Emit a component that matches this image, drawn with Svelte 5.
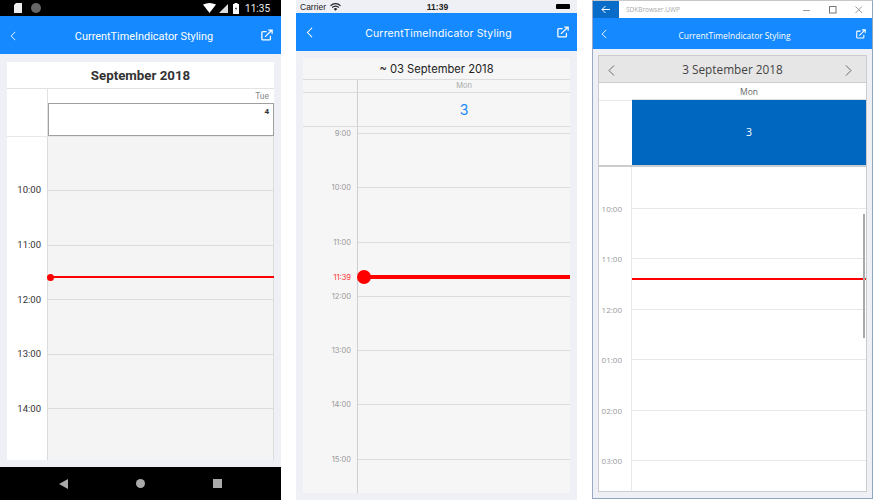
<script>
  const hoursA = ['10:00','11:00','12:00','13:00','14:00'];
  const hoursB = ['9:00','10:00','11:00','12:00','13:00','14:00','15:00'];
  const hoursC = ['10:00','11:00','12:00','01:00','02:00','03:00'];
</script>

{#snippet ext()}
  <svg class="ext" viewBox="0 0 14 14" fill="none" stroke="#fff" stroke-width="1.5">
    <path d="M11 8v3.600a1 1 0 0 1-1 1H2a1 1 0 0 1-1-1V4a1 1 0 0 1 1-1h4.500"/>
    <path d="M4.600 9.200 12 2M8.400 1.200h4.600v4.400" />
  </svg>
{/snippet}
{#snippet back()}
  <svg class="back" viewBox="0 0 8 13" fill="none" stroke="#fff" stroke-width="1.200"><path d="M7 1 1.500 6.500 7 12"/></svg>
{/snippet}

<div class="stage">
  <section class="phone a">
    <div class="status">
      <div class="s-left">
        <svg width="8" height="10" viewBox="0 0 8 10"><path d="M2 0h6v10H0V2z" fill="#eee"/></svg>
        <span class="rec"></span>
      </div>
      <div class="s-right">
        <svg width="13" height="10" viewBox="0 0 13 10"><path d="M0 1.500Q6.500-1.500 13 1.500L6.500 10z" fill="#fff"/></svg>
        <svg width="9" height="9" viewBox="0 0 9 9"><path d="M9 0v9H0z" fill="#ddd"/></svg>
        <svg class="batt" width="6" height="11" viewBox="0 0 6 11"><path d="M1.500 0h3v1H6v10H0V1h1.500z" fill="#fff"/><path d="M3.500 3 2 6h1.200L2.500 8.500 4 5.200H2.800z" fill="#000"/></svg>
        <span>11:35</span>
      </div>
    </div>
    <header class="bar">
      {@render back()}
      <h1>CurrentTimeIndicator Styling</h1>
      {@render ext()}
    </header>
    <div class="body">
      <div class="card">
        <div class="title">September 2018</div>
        <div class="head">
          <div class="gut"></div>
          <div class="col">
            <div class="dow">Tue</div>
            <div class="cell"><b>4</b></div>
          </div>
        </div>
        <div class="grid">
          <div class="labels">{#each hoursA as h}<span>{h}</span>{/each}</div>
          <div class="lines">{#each hoursA as h}<i></i>{/each}</div>
          <div class="now"><em></em></div>
        </div>
      </div>
    </div>
    <nav class="softkeys">
      <svg width="9" height="10" viewBox="0 0 9 10"><path d="M9 0v10L0 5z" fill="#aaa"/></svg>
      <span class="dot"></span>
      <span class="sq"></span>
    </nav>
  </section>

  <section class="phone b">
    <div class="status">
      <div class="s-left">
        <span>Carrier</span>
        <svg width="11" height="8" viewBox="0 0 11 8" fill="none" stroke="#222" stroke-width="1.200"><path d="M.5 2.800a7 7 0 0 1 10 0M2.200 4.500a4.600 4.600 0 0 1 6.600 0"/><path d="M3.800 6a2.200 2.200 0 0 1 3.400 0L5.500 7.800z" fill="#222" stroke="none"/></svg>
      </div>
      <strong>11:39</strong>
      <div class="ios-batt"><span></span></div>
    </div>
    <header class="bar">
      {@render back()}
      <h1>CurrentTimeIndicator Styling</h1>
      {@render ext()}
    </header>
    <div class="body">
      <div class="card">
        <div class="title">~ 03 September 2018</div>
        <div class="dow-row"><div class="gut"></div><div class="dow">Mon</div></div>
        <div class="num-row"><div class="gut"></div><div class="num">3</div></div>
        <div class="grid">
          <div class="labels">{#each hoursB as h}<span>{h}</span>{/each}</div>
          <div class="lines">{#each hoursB as h}<i></i>{/each}</div>
          <span class="now-label">11:39</span>
          <div class="now"><em></em></div>
        </div>
      </div>
    </div>
  </section>

  <section class="phone c">
    <div class="titlebar">
      <div class="tb-back">
        <svg width="10" height="9" viewBox="0 0 10 9" fill="none" stroke="#fff" stroke-width="1"><path d="M9 4.500H1M4.500 1 1 4.500 4.500 8"/></svg>
      </div>
      <span class="app">SDKBrowser.UWP</span>
      <div class="controls">
        <svg width="8" height="8" viewBox="0 0 8 8" stroke="#999" fill="none"><path d="M0 4.500h7"/></svg>
        <svg width="8" height="8" viewBox="0 0 8 8" stroke="#777" fill="none"><rect x=".5" y=".5" width="6.500" height="6.500"/></svg>
        <svg width="8" height="8" viewBox="0 0 8 8" stroke="#999" fill="none"><path d="m.5.500 6.500 6.500M7 .5.500 7"/></svg>
      </div>
    </div>
    <header class="bar">
      {@render back()}
      <h1>CurrentTimeIndicator Styling</h1>
      {@render ext()}
    </header>
    <div class="body">
      <div class="card">
        <div class="title">
          <svg width="7" height="11" viewBox="0 0 7 11" fill="none" stroke="#666"><path d="M6 .5 1 5.500l5 5"/></svg>
          <span>3 September 2018</span>
          <svg width="7" height="11" viewBox="0 0 7 11" fill="none" stroke="#666"><path d="m1 .5 5 5-5 5"/></svg>
        </div>
        <div class="dow-row"><div class="gut"></div><div class="dow">Mon</div></div>
        <div class="num-row"><div class="gut"></div><div class="num">3</div></div>
        <div class="grid">
          <div class="labels">{#each hoursC as h}<span>{h}</span>{/each}</div>
          <div class="lines">{#each hoursC as h}<i></i>{/each}</div>
          <div class="now"></div>
          <div class="thumb"></div>
        </div>
      </div>
    </div>
  </section>
</div>

<style>
  :global(body) { margin: 0; background: #fff; }
  .stage { width: 875px; height: 500px; display: flex; align-items: flex-start; overflow: hidden; }
  .phone { width: 281px; height: 500px; display: flex; flex-direction: column; flex: none; background: #eff0f5; box-sizing: border-box; }
  .phone + .phone { margin-left: 15px; }
  .bar { background: #1589ff; color: #fff; display: flex; align-items: center; flex: none; box-sizing: border-box; }
  .back, .ext { flex: none; display: block; }
  h1 { margin: 0; flex: 1; text-align: center; font-weight: 400; color: #fff; white-space: nowrap; }
  .body { flex: 1; min-height: 0; display: flex; flex-direction: column; }
  .card { flex: 1; min-height: 0; display: flex; flex-direction: column; }
  .grid { position: relative; flex: 1; min-height: 0; display: flex; overflow: hidden; }
  .labels { flex: none; display: flex; flex-direction: column; text-align: right; box-sizing: border-box; }
  .labels span { flex: none; display: block; }
  .lines { flex: 1; display: flex; flex-direction: column; }
  .lines i { display: block; flex: none; box-sizing: border-box; }
  .now { position: absolute; right: 0; background: #f00; }
  .now em { position: absolute; border-radius: 50%; background: #f00; }

  /* Android */
  .a { font-family: Roboto, sans-serif; }
  .a .status { height: 16px; background: #000; display: flex; align-items: center; justify-content: space-between; padding: 0 11px 0 14px; color: #eee; font-size: 10px; flex: none; }
  .a .s-left { display: flex; align-items: center; gap: 9px; }
  .rec { width: 10px; height: 10px; border-radius: 50%; background: #666; }
  .a .s-right { display: flex; align-items: center; gap: 3px; }
  .batt { margin: 0 3px 0 2px; }
  .a .bar { height: 38px; padding: 3px 8px 0 10px; }
  .a .back { width: 6px; height: 10px; margin-top: -2px; }
  .a .ext { width: 12px; height: 12px; margin-top: -3px; }
  .a h1 { font-size: 10.900px; margin-left: 11px; }
  .a .body { padding: 8px 7px 7px; }
  .a .card { background: #fff; }
  .a .title { height: 27px; flex: none; font-size: 13.300px; font-weight: 700; color: #333; text-align: center; line-height: 27px; border-bottom: 1px solid #e2e2e2; box-sizing: border-box; }
  .a .head { display: flex; height: 48px; flex: none; border-bottom: 1px solid #e8e8e8; box-sizing: border-box; }
  .a .head .gut { width: 41px; flex: none; border-right: 1px solid #e2e2e2; box-sizing: border-box; }
  .a .col { flex: 1; display: flex; flex-direction: column; }
  .a .dow { height: 14px; font-size: 8.500px; color: #888; text-align: right; padding-right: 5px; line-height: 14px; flex: none; }
  .a .cell { height: 33px; box-sizing: border-box; border: 1px solid #a0a0a0; text-align: right; padding: 3px 4px; font-size: 8px; line-height: 10px; color: #333; }
  .a .labels { width: 40px; padding: 26.400px 6px 0 0; font-size: 9.500px; color: #333; }
  .a .labels span { height: 54.600px; line-height: 54.600px; }
  .a .lines { background: #f4f4f4; border-left: 1px solid #dcdcdc; border-right: 1px solid #dcdcdc; }
  .a .lines i { height: 54.600px; border-bottom: 1px solid #dcdcdc; }
  .a .lines i:first-child { height: 54px; }
  .a .now { left: 40px; top: 139px; height: 2px; }
  .a .now em { left: 0; top: -2.500px; width: 7px; height: 7px; }
  .softkeys { height: 33px; background: #000; flex: none; display: flex; align-items: center; padding-left: 59px; }
  .dot { width: 9px; height: 9px; border-radius: 50%; background: #aaa; margin-left: 68px; }
  .sq { width: 9px; height: 9px; background: #aaa; margin-left: 68px; }

  /* iOS */
  .b { font-family: Inter, "Liberation Sans", sans-serif; }
  .b .status { height: 13px; display: flex; align-items: center; justify-content: space-between; padding: 0 6px 0 4px; font-size: 8.500px; color: #222; flex: none; font-family: "Liberation Sans", sans-serif; }
  .b .s-left { display: flex; align-items: center; gap: 4px; width: 60px; }
  .b .status strong { font-weight: 700; margin-right: 41px; }
  .ios-batt { width: 15px; height: 5px; position: relative; }
  .ios-batt span { display: block; width: 14px; height: 5px; background: #000; border-radius: 1px; }
  .b .bar { height: 38px; padding: 2px 8px 0 10px; }
  .b .back { width: 7px; height: 11px; margin-top: -2px; }
  .b .ext { width: 12px; height: 12px; margin-top: -3px; }
  .b h1 { font-size: 10.400px; margin-left: 7px; letter-spacing: .2px; }
  .b .body { padding: 7px 7px 7px; }
  .b .card { background: #f6f6f6; }
  .b .title { height: 22px; flex: none; font-size: 11.200px; color: #222; text-align: center; line-height: 22px; border-bottom: 1px solid #dcdcdc; box-sizing: border-box; }
  .b .dow-row { height: 13px; display: flex; flex: none; border-bottom: 1px solid #dcdcdc; box-sizing: border-box; }
  .b .gut { width: 55px; flex: none; border-right: 1px solid #d0d0d0; box-sizing: border-box; }
  .b .dow { flex: 1; text-align: center; font-size: 7.500px; color: #aaa; line-height: 12px; }
  .b .num-row { height: 34px; display: flex; flex: none; border-bottom: 1px solid #dcdcdc; box-sizing: border-box; }
  .b .num { flex: 1; text-align: center; color: #1589ff; font-size: 14px; line-height: 34px; }
  .b .labels { width: 55px; padding: 0 6px 0 0; font-size: 7.500px; color: #999; border-right: 1px solid #d0d0d0; margin-top: -21px; }
  .b .labels span { height: 54.300px; line-height: 54.300px; position: relative; top: 1px; }
  .b .lines { padding-top: 6px; }
  .b .lines i { height: 54.300px; border-top: 1px solid #dcdcdc; }
  .b .now { left: 55px; top: 148px; height: 4px; }
  .b .now em { left: -1px; top: -5px; width: 14px; height: 14px; }
  .now-label { position: absolute; right: 219px; top: 146px; font-size: 7.500px; line-height: 10px; color: #f33; }

  /* UWP */
  .c { font-family: "Open Sans", sans-serif; border: 1px solid #8fa5c4; border-top-color: #c8c8c8; border-left-color: #9aa8c4; width: 281px; height: 499px; }
  .titlebar { height: 17px; background: #fff; display: flex; align-items: center; flex: none; }
  .tb-back { width: 26px; height: 17px; background: #0a6cc9; display: flex; align-items: center; justify-content: center; }
  .app { font-size: 6.500px; color: #aaa; margin-left: 7px; flex: 1; }
  .controls { display: flex; gap: 18px; padding-right: 9px; align-items: center; }
  .c .bar { height: 31px; padding: 3px 6px 0 8px; }
  .c .back { width: 6px; height: 10px; margin-top: -2px; }
  .c .ext { width: 10px; height: 10px; margin-top: -2px; }
  .c h1 { font-size: 8.400px; margin-left: 6px; }
  .c .body { padding: 6px 5px 6px 5px; }
  .c .card { background: #fff; border: 1px solid #ccc; }
  .c .title { height: 27px; flex: none; background: #e6e6e6; display: flex; align-items: center; justify-content: space-between; padding: 0 14px 0 9px; font-size: 11.800px; color: #444; box-sizing: border-box; border-bottom: 1px solid #ccc; }
  .c .title span { margin-left: 5px; }
  .c .title svg { margin-top: 3px; }
  .c .dow-row { height: 17px; flex: none; display: flex; }
  .c .gut { width: 33px; flex: none; }
  .c .dow { flex: 1; text-align: center; font-size: 8.500px; color: #666; line-height: 17px; border-bottom: 1px solid #e0e0e0; box-sizing: border-box; }
  .c .num-row { height: 67px; flex: none; display: flex; border-bottom: 2px solid #ccc; box-sizing: border-box; }
  .c .num { flex: 1; background: #0067c0; color: #fff; text-align: center; line-height: 65px; font-size: 10.500px; }
  .c .num-row .gut { border-top: 1px solid #e8e8e8; box-sizing: border-box; }
  .c .labels { width: 33px; padding: 17px 9px 0 0; font-size: 8px; color: #999; border-right: 1px solid #e8e8e8; }
  .c .labels span { height: 50.400px; line-height: 50.400px; }
  .c .lines { padding-top: 41px; }
  .c .lines i { height: 50.400px; border-top: 1px solid #e8e8e8; }
  .c .now { left: 33px; top: 111px; height: 2px; }
  .thumb { position: absolute; right: 1px; top: 47px; width: 2px; height: 124px; background: #aaa; }
</style>
